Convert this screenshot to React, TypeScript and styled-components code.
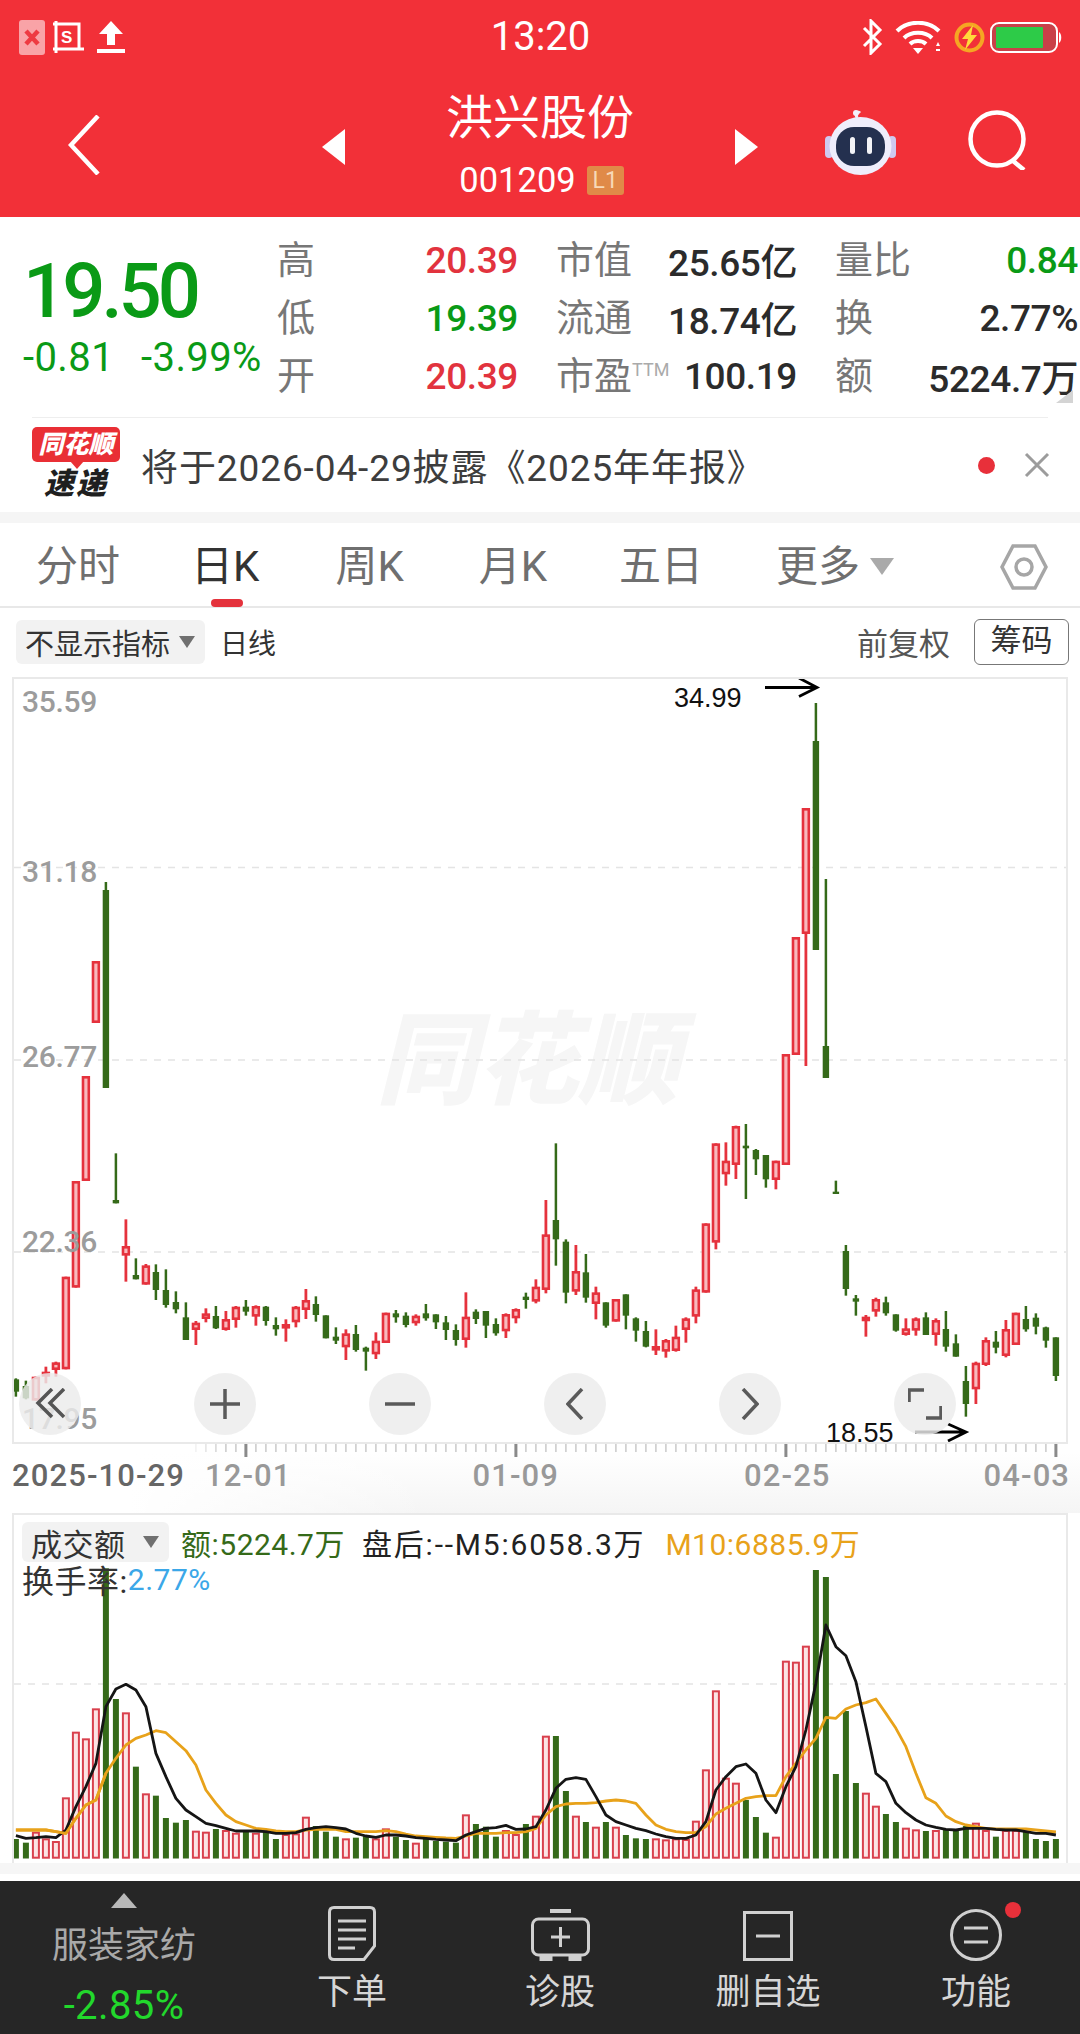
import styled, { createGlobalStyle } from "styled-components";

const sans = `Roboto, "Noto Sans CJK SC", sans-serif`;
const RED = "#e5323d";
const GREEN = "#356a19";

const GlobalStyle = createGlobalStyle`
  html, body { margin: 0; padding: 0; background: #fff; }
  * { box-sizing: border-box; }
  svg { display: block; }
`;

// [up, high, bodyTop, bodyBottom, low] in crop units: page y = 1120 + v / 3
type Candle = [number, number, number, number, number];
const candles: Candle[] = [
  [0, 775, 778, 815, 830], [0, 782, 798, 835, 838], [1, 770, 770, 842, 842], [1, 740, 755, 770, 790], [1, 725, 727, 750, 770],
  [1, 470, 470, 748, 748], [1, 183, 183, 503, 503], [1, -132, -132, 183, 183], [1, -477, -477, -291, -291], [0, -714, -690, -96, -96],
  [0, 100, 240, 250, 250], [1, 298, 378, 407, 485], [0, 415, 465, 478, 478], [1, 432, 436, 494, 494], [0, 433, 456, 510, 540],
  [0, 448, 510, 555, 563], [0, 514, 546, 568, 580], [0, 547, 592, 660, 660], [1, 603, 608, 630, 675], [1, 565, 580, 597, 607],
  [0, 558, 588, 625, 627], [1, 573, 597, 630, 632], [1, 558, 560, 600, 623], [0, 540, 560, 575, 587], [1, 556, 558, 590, 617],
  [0, 558, 560, 603, 617], [0, 592, 615, 628, 647], [1, 598, 612, 625, 665], [1, 558, 560, 607, 622], [1, 507, 540, 570, 597],
  [0, 529, 552, 585, 605], [0, 586, 586, 655, 655], [0, 622, 650, 662, 672], [1, 628, 640, 682, 720], [0, 615, 642, 690, 695],
  [0, 680, 683, 695, 752], [1, 637, 662, 703, 717], [1, 578, 578, 669, 669], [0, 570, 580, 592, 608], [0, 577, 587, 615, 622],
  [1, 583, 587, 610, 617], [0, 552, 580, 595, 602], [0, 583, 583, 607, 627], [0, 588, 607, 630, 660], [0, 613, 630, 660, 677],
  [1, 517, 590, 660, 683], [0, 568, 575, 597, 612], [0, 573, 573, 617, 654], [0, 595, 612, 640, 647], [1, 580, 582, 634, 654],
  [1, 565, 567, 595, 610], [0, 518, 530, 540, 566], [1, 478, 500, 545, 550], [1, 240, 343, 510, 520], [0, 70, 300, 358, 437],
  [0, 358, 365, 518, 550], [1, 375, 453, 515, 525], [0, 402, 457, 533, 548], [1, 500, 517, 552, 598], [0, 547, 547, 617, 623],
  [1, 537, 537, 605, 605], [0, 523, 523, 587, 628], [0, 592, 595, 632, 665], [0, 603, 633, 680, 682], [1, 628, 678, 690, 705],
  [1, 657, 660, 695, 713], [1, 617, 650, 693, 695], [1, 592, 595, 630, 668], [1, 500, 508, 590, 610], [1, 310, 310, 518, 518],
  [1, 70, 70, 368, 388], [1, 67, 122, 163, 197], [1, 17, 18, 135, 177], [0, 12, 77, 85, 237], [0, 87, 90, 118, 165],
  [0, 105, 105, 178, 203], [1, 122, 122, 180, 208], [1, -198, -198, 135, 135], [1, -549, -549, -195, -195], [1, -936, -936, -558, -162],
  [0, -1251, -1137, -510, -510], [0, -723, -222, -126, -126], [0, 182, 215, 222, 222], [0, 375, 393, 507, 527], [0, 525, 535, 545, 587],
  [1, 585, 590, 600, 650], [1, 533, 537, 575, 590], [0, 530, 547, 580, 587], [0, 583, 583, 632, 635], [1, 595, 625, 645, 647],
  [1, 592, 595, 632, 647], [0, 577, 592, 645, 645], [1, 595, 600, 645, 677], [0, 573, 627, 680, 695], [0, 643, 670, 710, 710],
  [0, 738, 783, 852, 890], [1, 725, 728, 808, 852], [1, 652, 660, 735, 738], [0, 633, 665, 683, 700], [1, 600, 627, 708, 712],
  [1, 578, 578, 675, 675], [0, 558, 597, 628, 635], [0, 580, 593, 620, 643], [0, 620, 622, 662, 683], [0, 652, 652, 768, 783],
];

// bar tops, crop units: page y = 1510 + v / 3
const volumes = [
  987, 998, 965, 985, 993, 862, 665, 685, 595, 175, 567, 607, 770, 850, 857, 924, 938, 930, 962, 965, 957,
  960, 968, 965, 968, 965, 987, 972, 970, 920, 948, 965, 980, 985, 983, 978, 985, 955, 980, 990, 998, 985,
  993, 995, 998, 913, 942, 950, 980, 960, 972, 942, 917, 677, 678, 843, 917, 936, 950, 936, 950, 975, 985,
  987, 985, 988, 985, 987, 932, 778, 541, 803, 818, 870, 921, 968, 980, 452, 455, 407, 180, 201, 792, 603,
  819, 848, 887, 912, 936, 953, 958, 963, 960, 960, 960, 948, 938, 960, 980, 960, 960, 965, 987, 993, 987,
];

const m5 = [
  977, 985, 983, 980, 983, 960, 890, 830, 760, 590, 537, 523, 540, 590, 730, 800, 865, 900, 920, 940, 947,
  955, 963, 963, 963, 965, 970, 970, 968, 958, 953, 950, 953, 957, 970, 978, 982, 975, 975, 978, 983, 985,
  988, 990, 992, 975, 965, 955, 953, 946, 958, 957, 950, 900, 835, 808, 803, 808, 860, 915, 935, 945, 955,
  962, 972, 980, 985, 985, 975, 935, 840, 800, 770, 762, 790, 870, 908, 830, 770, 660, 520, 345, 410, 437,
  515, 650, 790, 815, 880, 908, 930, 945, 952, 958, 960, 955, 955, 955, 958, 960, 960, 965, 970, 970, 975,
];

const m10 = [
  960, 960, 960, 960, 965, 970, 925, 885, 870, 790, 745, 705, 685, 675, 662, 668, 695, 722, 765, 840, 880,
  915, 935, 945, 955, 958, 963, 965, 965, 960, 958, 957, 958, 965, 965, 965, 965, 962, 965, 972, 978, 980,
  982, 984, 985, 978, 970, 970, 970, 968, 968, 965, 955, 915, 890, 882, 880, 880, 878, 873, 870, 873, 880,
  915, 945, 958, 965, 968, 968, 950, 912, 895, 880, 865, 860, 857, 857, 800, 760, 720, 685, 622, 625, 597,
  585, 578, 567, 610, 655, 710, 790, 863, 880, 918, 935, 945, 950, 955, 957, 957, 957, 957, 960, 963, 966,
];

const cx = (i: number) => 15.9 + i * 10;
const ky = (v: number) => 1120 + v / 3;
const vy = (v: number) => 1510 + v / 3;
const linePts = (data: number[]) => data.map((v, i) => `${cx(i)},${vy(v)}`).join(" ");

const Page = styled.div`
  width: 1080px;
  height: 2034px;
  overflow: hidden;
  background: #fff;
  display: flex;
  flex-direction: column;
  font-family: ${sans};
`;

const Header = styled.header`
  height: 217px;
  background: #f23038;
  color: #fff;
  flex: none;
`;

const StatusBar = styled.div`
  height: 60px;
  display: grid;
  grid-template-columns: 1fr auto 1fr;
  align-items: center;
  padding: 14px 18px 0 19px;
`;

const StatusGroup = styled.div<{ $right?: boolean }>`
  display: flex;
  align-items: center;
  justify-content: ${(p) => (p.$right ? "flex-end" : "flex-start")};
  gap: 5px;
`;

const StatusIcon = styled.div<{ $left: number }>`
  margin-left: ${(p) => p.$left}px;
`;

const Clock = styled.div`
  font-size: 40px;
  line-height: 40px;
`;

const NavBar = styled.div`
  height: 157px;
  display: flex;
  align-items: flex-start;
`;

const BackButton = styled.div`
  width: 322px;
  padding: 55px 0 0 68px;
`;

const Arrow = styled.div<{ $dir: "left" | "right" }>`
  margin-top: 69px;
  width: 0;
  height: 0;
  border-top: 18px solid transparent;
  border-bottom: 18px solid transparent;
  ${(p) => (p.$dir === "left" ? "border-right: 23px solid #fff;" : "border-left: 23px solid #fff;")}
`;

const TitleBlock = styled.div`
  width: 390px;
  display: flex;
  flex-direction: column;
  align-items: center;
  padding-top: 32px;
`;

const StockName = styled.div`
  font-size: 47px;
  line-height: 52px;
`;

const CodeRow = styled.div`
  margin-top: 19px;
  display: flex;
  align-items: center;
  gap: 11px;
  font-size: 34.5px;
  line-height: 34px;
  padding-left: 3px;
`;

const LevelBadge = styled.span`
  width: 37px;
  height: 29px;
  background: #e08a48;
  color: #f7d9b8;
  border-radius: 3px;
  font-size: 23px;
  line-height: 29px;
  text-align: center;
`;

const NavRight = styled.div`
  flex: 1;
  display: flex;
  align-items: flex-start;
  padding: 50px 0 0 67px;
  gap: 71px;
`;

const Quote = styled.section`
  position: relative;
  height: 200px;
  display: flex;
  flex: none;
`;

const PriceBlock = styled.div`
  width: 277px;
  padding: 32px 0 0 23px;
`;

const Price = styled.div`
  font-size: 76px;
  line-height: 84px;
  font-weight: 500;
  letter-spacing: -4px;
  color: #0a9a16;
`;

const Changes = styled.div`
  margin-top: 5px;
  display: flex;
  gap: 27px;
  font-size: 40px;
  line-height: 40px;
  color: #0a9a16;
  white-space: nowrap;
  letter-spacing: 0.4px;
`;

const StatGrid = styled.div`
  display: grid;
  grid-template-columns: 241px 241px 243px;
  column-gap: 38px;
  grid-auto-rows: 58px;
  padding-top: 13px;
`;

const StatCell = styled.div`
  display: flex;
  justify-content: space-between;
  align-items: center;
  white-space: nowrap;
`;

const StatLabel = styled.span`
  font-size: 38px;
  margin-bottom: 5px;
  color: #777;
  sup {
    font-size: 18px;
    line-height: 1;
    vertical-align: 13px;
    color: #aaa;
  }
`;

const StatValue = styled.span<{ $color?: string }>`
  font-size: 37px;
  font-weight: 500;
  margin-top: 2px;
  letter-spacing: -0.4px;
  color: ${(p) => p.$color || "#2b2b2b"};
`;

const CornerMark = styled.div`
  position: absolute;
  right: 7px;
  bottom: 14px;
  width: 0;
  height: 0;
  border-left: 17px solid transparent;
  border-bottom: 13px solid #d4d4d4;
`;

const NewsRow = styled.section`
  margin: 0 32px;
  height: 95px;
  flex: none;
  border-top: 1.5px solid #eee;
  display: flex;
  align-items: center;
`;

const LogoBox = styled.div`
  width: 88px;
  height: 76px;
  display: flex;
  flex-direction: column;
  align-items: center;
  flex: none;
`;

const LogoBubble = styled.div`
  position: relative;
  width: 88px;
  height: 35px;
  background: #e92f35;
  border-radius: 5px;
  color: #fff;
  font-size: 25px;
  line-height: 35px;
  font-weight: 900;
  font-style: italic;
  text-align: center;
  white-space: nowrap;
  &::after {
    content: "";
    position: absolute;
    left: 38px;
    bottom: -7px;
    border-left: 7px solid transparent;
    border-right: 7px solid transparent;
    border-top: 8px solid #e92f35;
  }
`;

const LogoLabel = styled.div`
  margin-top: 6px;
  font-size: 30px;
  line-height: 32px;
  font-weight: 900;
  font-style: italic;
  color: #1f1f1f;
  letter-spacing: 2px;
`;

const NewsText = styled.div`
  margin-left: 21px;
  flex: 1;
  font-size: 37px;
  color: #3d3d3d;
  white-space: nowrap;
  letter-spacing: 0.9px;
`;

const RedDot = styled.span<{ $size: number }>`
  display: block;
  width: ${(p) => p.$size}px;
  height: ${(p) => p.$size}px;
  border-radius: 50%;
  background: #e8303a;
  flex: none;
`;

const CloseIcon = styled.div`
  margin: 0 -2px 0 29px;
`;

const Band = styled.div<{ $h: number; $bg: string }>`
  height: ${(p) => p.$h}px;
  background: ${(p) => p.$bg};
  flex: none;
`;

const Tabs = styled.nav`
  height: 85px;
  flex: none;
  position: relative;
  border-bottom: 2px solid #e8e8e8;
  display: flex;
  align-items: center;
  padding-top: 4px;
`;

const Tab = styled.div<{ $active?: boolean; $left: number }>`
  position: relative;
  margin-left: ${(p) => p.$left}px;
  font-size: 42px;
  line-height: 56px;
  color: ${(p) => (p.$active ? "#333" : "#6f6f6f")};
  ${(p) =>
    p.$active &&
    `&::after {
      content: "";
      position: absolute;
      left: 20px;
      bottom: -12px;
      width: 32px;
      height: 8px;
      border-radius: 4px;
      background: #e4323c;
    }`}
`;

const TabCaret = styled.span`
  margin: 0 0 0 10px;
  width: 0;
  height: 0;
  border-left: 12px solid transparent;
  border-right: 12px solid transparent;
  border-top: 17px solid #aaa;
`;

const HexWrap = styled.div`
  margin-left: auto;
  margin-right: 32px;
`;

const Toolbar = styled.div`
  height: 69px;
  flex: none;
  display: flex;
  align-items: center;
  padding: 0 11px 2px 16px;
`;

const Chip = styled.div<{ $w: number; $h: number }>`
  width: ${(p) => p.$w}px;
  height: ${(p) => p.$h}px;
  background: #f2f2f2;
  border-radius: 6px;
  display: flex;
  align-items: center;
  justify-content: space-between;
  padding: 0 10px 0 9px;
  color: #333;
  white-space: nowrap;
`;

const ChipText = styled.span<{ $size: number }>`
  font-size: ${(p) => p.$size}px;
`;

const Caret = styled.span<{ $w: number; $h: number }>`
  width: 0;
  height: 0;
  border-left: ${(p) => p.$w / 2}px solid transparent;
  border-right: ${(p) => p.$w / 2}px solid transparent;
  border-top: ${(p) => p.$h}px solid #707070;
`;

const PlainText = styled.span<{ $size: number; $left: number; $color: string }>`
  margin-left: ${(p) => p.$left}px;
  font-size: ${(p) => p.$size}px;
  color: ${(p) => p.$color};
  white-space: nowrap;
`;

const OutlineButton = styled.div`
  margin-left: 24px;
  width: 95px;
  height: 46px;
  border: 1.5px solid #777;
  border-radius: 6px;
  font-size: 31px;
  line-height: 42px;
  text-align: center;
  color: #333;
`;

const Spacer = styled.div`
  flex: 1;
`;

const ChartFrame = styled.section`
  position: relative;
  margin: 0 12px;
  height: 767px;
  flex: none;
  border: 2px solid #e9e9e9;
  svg {
    position: relative;
    z-index: 1;
  }
`;

const Watermark = styled.div`
  position: absolute;
  left: 362px;
  top: 328px;
  font-size: 101px;
  line-height: 110px;
  font-weight: 900;
  font-style: italic;
  color: #f6f6f6;
  white-space: nowrap;
`;

const AxisLabel = styled.span<{ $top: number }>`
  position: absolute;
  left: 8px;
  top: ${(p) => p.$top}px;
  z-index: 2;
  font-size: 30px;
  line-height: 30px;
  font-weight: 500;
  letter-spacing: -0.3px;
  color: #9c9c9c;
`;

const PointLabel = styled.span<{ $left: number; $top: number }>`
  position: absolute;
  left: ${(p) => p.$left}px;
  top: ${(p) => p.$top}px;
  z-index: 2;
  font-family: "Liberation Sans", sans-serif;
  font-size: 27px;
  line-height: 27px;
  color: #111;
`;

const ChartButtons = styled.div`
  position: absolute;
  left: 5px;
  top: 694px;
  z-index: 3;
  display: flex;
  gap: 113px;
`;

const RoundButton = styled.div`
  width: 62px;
  height: 62px;
  border-radius: 50%;
  background: rgba(235, 235, 236, 0.82);
  display: flex;
  align-items: center;
  justify-content: center;
`;

const DateAxis = styled.div`
  height: 69px;
  flex: none;
  position: relative;
  background:
    linear-gradient(90deg, #fff 12%, rgba(255, 255, 255, 0) 40%),
    linear-gradient(180deg, #fff 12%, #f5f5f5 100%);
`;

const TickStrip = styled.svg`
  position: absolute;
  left: 0;
  top: 0;
`;

const DateLabels = styled.div`
  display: flex;
  padding: 14px 0 0 12px;
`;

const DateLabel = styled.span<{ $gap: number; $dark?: boolean }>`
  margin-left: ${(p) => p.$gap}px;
  font-size: 31px;
  line-height: 36px;
  letter-spacing: 1.1px;
  font-weight: 500;
  color: ${(p) => (p.$dark ? "#666" : "#999")};
  white-space: nowrap;
`;

const VolumeFrame = styled.section`
  position: relative;
  margin: 0 12px;
  height: 350px;
  flex: none;
  border: 2px solid #e9e9e9;
  border-bottom: none;
`;

const Legend = styled.div`
  position: absolute;
  left: 8px;
  top: 7px;
  z-index: 2;
  font-size: 30px;
`;

const LegendRow = styled.div<{ $pull?: number }>`
  display: flex;
  align-items: center;
  height: 40px;
  margin-top: ${(p) => (p.$pull ? -p.$pull : 0)}px;
  white-space: nowrap;
  letter-spacing: 0.5px;
`;

const LegendItem = styled.span<{ $color: string; $left?: number; $spacing?: number; $size?: number }>`
  color: ${(p) => p.$color};
  margin-left: ${(p) => p.$left || 0}px;
  ${(p) => p.$spacing !== undefined && `letter-spacing: ${p.$spacing}px;`}
  ${(p) => p.$size !== undefined && `font-size: ${p.$size}px;`}
`;

const Footer = styled.footer`
  flex: 1;
  background: #262626;
  display: grid;
  grid-template-columns: 248px repeat(4, 208px);
  color: #d6d6d6;
`;

const SectorCell = styled.div`
  display: flex;
  flex-direction: column;
  align-items: center;
  padding-top: 12px;
`;

const SectorCaret = styled.span`
  width: 0;
  height: 0;
  border-left: 13px solid transparent;
  border-right: 13px solid transparent;
  border-bottom: 15px solid #b8b8b8;
`;

const SectorName = styled.div`
  margin-top: 15px;
  font-size: 36px;
  line-height: 46px;
  color: #a9a9a9;
`;

const SectorChange = styled.div`
  margin-top: 16px;
  font-size: 40px;
  line-height: 42px;
  letter-spacing: 0.4px;
  color: #22d82c;
`;

const FooterItem = styled.div`
  position: relative;
  display: flex;
  flex-direction: column;
  align-items: center;
  padding-top: 24px;
`;

const IconSlot = styled.div`
  height: 56px;
  display: flex;
  align-items: flex-end;
`;

const FooterLabel = styled.div`
  margin-top: 10px;
  font-size: 35px;
  line-height: 44px;
`;

const BadgeDot = styled.div`
  position: absolute;
  left: 133px;
  top: 21px;
`;

const Candles = () => (
  <>
    {candles.map(([up, high, top, bottom, low], i) => {
      const x = cx(i);
      const color = up ? RED : GREEN;
      return (
        <g key={i}>
          <line x1={x} x2={x} y1={ky(high)} y2={ky(low)} stroke={color} strokeWidth={up ? 2.8 : 2.5} />
          {up ? (
            <rect
              x={x - 2.9}
              y={ky(top) + 1.3}
              width={5.8}
              height={Math.max(ky(bottom) - ky(top) - 2.6, 2)}
              fill="#f9b9bd"
              stroke={color}
              strokeWidth={2.6}
            />
          ) : (
            <rect x={x - 3.2} y={ky(top)} width={6.4} height={Math.max(ky(bottom) - ky(top), 2)} fill={color} />
          )}
        </g>
      );
    })}
  </>
);

const VolumeBars = () => (
  <>
    {volumes.map((v, i) => {
      const x = cx(i);
      const up = candles[i][0];
      const top = vy(v);
      return up ? (
        <rect key={i} x={x - 3} y={top + 1} width={6} height={1857.7 - top - 1} fill="#fce3e4" stroke="#d9404d" strokeWidth={2} />
      ) : (
        <rect key={i} x={x - 3} y={top} width={6} height={1858.5 - top} fill={GREEN} />
      );
    })}
  </>
);

const stats: { label: React.ReactNode; value: string; color?: string }[] = [
  { label: "高", value: "20.39", color: "#e2333e" },
  { label: "市值", value: "25.65亿" },
  { label: "量比", value: "0.84", color: "#0a9a16" },
  { label: "低", value: "19.39", color: "#0a9a16" },
  { label: "流通", value: "18.74亿" },
  { label: "换", value: "2.77%" },
  { label: "开", value: "20.39", color: "#e2333e" },
  { label: <>市盈<sup>TTM</sup></>, value: "100.19" },
  { label: "额", value: "5224.7万" },
];

const ticks = Array.from({ length: 87 }, (_, k) => k + 18);

export default function App() {
  return (
    <Page>
      <GlobalStyle />
      <Header>
        <StatusBar>
          <StatusGroup>
            <svg width="26" height="35" viewBox="0 0 26 35">
              <rect width="26" height="35" rx="3" fill="#f9a3a7" />
              <path d="M7 11 L19 24 M19 11 L7 24" stroke="#ee3a42" strokeWidth="4.5" />
            </svg>
            <StatusIcon $left={3}>
              <svg width="31" height="32" viewBox="0 0 31 32" fill="none" stroke="#fff">
                <path d="M3 0 V32 M0 3 H26 V28 M0 28 H31" strokeWidth="3" />
                <text x="8" y="22" fontFamily="Liberation Sans" fontSize="17" fontWeight="700" fill="#fff" stroke="none">S</text>
              </svg>
            </StatusIcon>
            <StatusIcon $left={8}>
              <svg width="28" height="32" viewBox="0 0 28 32">
                <path d="M14 0 L26 13 H18 V24 H10 V13 H2 Z M0 28 H28 V32 H0 Z" fill="#fff" />
              </svg>
            </StatusIcon>
          </StatusGroup>
          <Clock>13:20</Clock>
          <StatusGroup $right>
            <svg width="22" height="36" viewBox="0 0 22 36" fill="none" stroke="#fff" strokeWidth="3">
              <path d="M3 9 L19 25 L10 34 V2 L19 11 L3 27" />
            </svg>
            <StatusIcon $left={7}>
              <svg width="46" height="33" viewBox="0 0 46 33" fill="none" stroke="#fff">
                <path d="M2 10 C13 -1 33 -1 44 10" strokeWidth="4" />
                <path d="M9 17 C16 10 30 10 37 17" strokeWidth="4" />
                <path d="M15 23 C19 19 27 19 31 23" strokeWidth="4" />
                <path d="M18 27 H28 L23 33 Z" fill="#fff" stroke="none" />
                <path d="M41 25 L45 25 L43 21 Z M41 28 H45 V30 H41 Z" fill="#fff" stroke="none" />
              </svg>
            </StatusIcon>
            <StatusIcon $left={8}>
              <svg width="31" height="31" viewBox="0 0 31 31">
                <circle cx="15.5" cy="15.5" r="13" fill="none" stroke="#f5a623" strokeWidth="4" />
                <path d="M19 3 L8 17 H14 L11 28 L23 13 H17 Z" fill="#ffd93b" />
              </svg>
            </StatusIcon>
            <svg width="72" height="31" viewBox="0 0 72 31">
              <rect x="1" y="1" width="66" height="29" rx="8" fill="#c94048" stroke="#fff" strokeWidth="2" />
              <rect x="6" y="5" width="47" height="21" rx="1" fill="#2dcb48" />
              <path d="M69 10 C72 12 72 19 69 21 Z" fill="#fff" />
            </svg>
          </StatusGroup>
        </StatusBar>
        <NavBar>
          <BackButton>
            <svg width="32" height="60" viewBox="0 0 32 60" fill="none" stroke="#fff" strokeWidth="4.5">
              <path d="M30 1 L3 30 L30 59" />
            </svg>
          </BackButton>
          <Arrow $dir="left" />
          <TitleBlock>
            <StockName>洪兴股份</StockName>
            <CodeRow>
              001209
              <LevelBadge>L1</LevelBadge>
            </CodeRow>
          </TitleBlock>
          <Arrow $dir="right" />
          <NavRight>
            <svg width="72" height="66" viewBox="0 0 72 66">
              <path d="M32 8 C30 3 33 1 35 3" fill="none" stroke="#ecebf7" strokeWidth="3" />
              <circle cx="31" cy="3" r="3" fill="#f3f1fb" />
              <rect x="0" y="26" width="8" height="22" rx="4" fill="#cfc9ef" />
              <rect x="63" y="26" width="8" height="22" rx="4" fill="#cfc9ef" />
              <ellipse cx="35.5" cy="36" rx="31" ry="29" fill="#efedfb" />
              <rect x="11" y="17" width="49" height="39" rx="18" fill="#24304f" />
              <rect x="25" y="27" width="5" height="17" rx="2.5" fill="#f3f3f7" />
              <rect x="42" y="27" width="5" height="17" rx="2.5" fill="#f3f3f7" />
            </svg>
            <svg width="62" height="60" viewBox="0 0 62 60" fill="none" stroke="#fff" strokeWidth="4.5">
              <circle cx="29" cy="29" r="26.5" />
              <path d="M44 50 L56 60" />
            </svg>
          </NavRight>
        </NavBar>
      </Header>

      <Quote>
        <PriceBlock>
          <Price>19.50</Price>
          <Changes>
            <span>-0.81</span>
            <span>-3.99%</span>
          </Changes>
        </PriceBlock>
        <StatGrid>
          {stats.map((s, i) => (
            <StatCell key={i}>
              <StatLabel>{s.label}</StatLabel>
              <StatValue $color={s.color}>{s.value}</StatValue>
            </StatCell>
          ))}
        </StatGrid>
        <CornerMark />
      </Quote>

      <NewsRow>
        <LogoBox>
          <LogoBubble>同花顺</LogoBubble>
          <LogoLabel>速递</LogoLabel>
        </LogoBox>
        <NewsText>将于2026-04-29披露《2025年年报》</NewsText>
        <RedDot $size={17} />
        <CloseIcon>
          <svg width="26" height="26" viewBox="0 0 26 26" stroke="#9c9c9c" strokeWidth="3">
            <path d="M2 2 L24 24 M24 2 L2 24" />
          </svg>
        </CloseIcon>
      </NewsRow>
      <Band $h={11} $bg="#f5f5f5" />

      <Tabs>
        <Tab $left={36}>分时</Tab>
        <Tab $left={71} $active>日K</Tab>
        <Tab $left={76}>周K</Tab>
        <Tab $left={75}>月K</Tab>
        <Tab $left={72}>五日</Tab>
        <Tab $left={73}>更多</Tab>
        <TabCaret />
        <HexWrap>
          <svg width="48" height="46" viewBox="0 0 48 46" fill="none" stroke="#a6a6a6" strokeWidth="3.5">
            <path d="M13 2 H35 L46 23 L35 44 H13 L2 23 Z" />
            <circle cx="24" cy="23" r="8" />
          </svg>
        </HexWrap>
      </Tabs>

      <Toolbar>
        <Chip $w={189} $h={44}>
          <ChipText $size={29}>不显示指标</ChipText>
          <Caret $w={17} $h={12} />
        </Chip>
        <PlainText $size={28} $left={15} $color="#333">日线</PlainText>
        <Spacer />
        <PlainText $size={31} $left={0} $color="#555">前复权</PlainText>
        <OutlineButton>筹码</OutlineButton>
      </Toolbar>

      <ChartFrame>
        <Watermark>同花顺</Watermark>
        <svg width="1052" height="763" viewBox="14 679 1052 763">
          {[867.5, 1060, 1252].map((y) => (
            <line key={y} x1="14" x2="1066" y1={y} y2={y} stroke="#e4e4e4" strokeWidth="1.5" strokeDasharray="7 7" />
          ))}
          <Candles />
          <g fill="none" stroke="#000" strokeWidth="2.8">
            <path d="M765 687.5 H816 M799 678 L817 687.5 L799 696.5" />
            <path d="M915 1432 H965 M948 1424 L966 1432 L948 1441" />
          </g>
        </svg>
        <AxisLabel $top={8}>35.59</AxisLabel>
        <AxisLabel $top={178}>31.18</AxisLabel>
        <AxisLabel $top={363}>26.77</AxisLabel>
        <AxisLabel $top={548}>22.36</AxisLabel>
        <AxisLabel $top={725}>17.95</AxisLabel>
        <PointLabel $left={660} $top={6}>34.99</PointLabel>
        <PointLabel $left={812} $top={741}>18.55</PointLabel>
        <ChartButtons>
          <RoundButton>
            <svg width="30" height="32" viewBox="0 0 30 32" fill="none" stroke="#555" strokeWidth="3.5">
              <path d="M17 1 L3 15 L17 29 M29 1 L15 15 L29 29" />
            </svg>
          </RoundButton>
          <RoundButton>
            <svg width="30" height="30" viewBox="0 0 30 30" stroke="#5a5a5a" strokeWidth="3.5">
              <path d="M15 0 V30 M0 15 H30" />
            </svg>
          </RoundButton>
          <RoundButton>
            <svg width="30" height="4" viewBox="0 0 30 4" stroke="#5a5a5a" strokeWidth="3.5">
              <path d="M0 2 H30" />
            </svg>
          </RoundButton>
          <RoundButton>
            <svg width="18" height="32" viewBox="0 0 18 32" fill="none" stroke="#5a5a5a" strokeWidth="3.5">
              <path d="M16 1 L2 16 L16 31" />
            </svg>
          </RoundButton>
          <RoundButton>
            <svg width="18" height="32" viewBox="0 0 18 32" fill="none" stroke="#5a5a5a" strokeWidth="3.5">
              <path d="M2 1 L16 16 L2 31" />
            </svg>
          </RoundButton>
          <RoundButton>
            <svg width="34" height="32" viewBox="0 0 34 32" fill="none" stroke="#5a5a5a" strokeWidth="3.5">
              <path d="M1 14 V2 H16 M33 18 V30 H18" />
            </svg>
          </RoundButton>
        </ChartButtons>
      </ChartFrame>

      <DateAxis>
        <TickStrip width="1080" height="14" viewBox="0 1444 1080 14">
          {ticks.map((i) => {
            const big = (i - 23) % 27 === 0;
            return (
              <line
                key={i}
                x1={cx(i)}
                x2={cx(i)}
                y1={1444}
                y2={big ? 1457 : 1452}
                stroke={big ? "#8a8a8a" : "#c9c9c9"}
                strokeWidth={big ? 3 : 1.5}
                opacity={i < 21 ? (i - 17) * 0.25 : 1}
              />
            );
          })}
        </TickStrip>
        <DateLabels>
          <DateLabel $gap={0} $dark>2025-10-29</DateLabel>
          <DateLabel $gap={20}>12-01</DateLabel>
          <DateLabel $gap={181}>01-09</DateLabel>
          <DateLabel $gap={185}>02-25</DateLabel>
          <DateLabel $gap={153}>04-03</DateLabel>
        </DateLabels>
      </DateAxis>

      <VolumeFrame>
        <svg width="1052" height="348" viewBox="14 1515 1052 348">
          <line x1="14" x2="1066" y1="1684" y2="1684" stroke="#e4e4e4" strokeWidth="1.5" strokeDasharray="7 7" />
          <VolumeBars />
          <polyline points={linePts(m10)} fill="none" stroke="#e8a21a" strokeWidth="2.8" strokeLinejoin="round" />
          <polyline points={linePts(m5)} fill="none" stroke="#151515" strokeWidth="2.8" strokeLinejoin="round" />
          <polyline points={linePts(m10.slice(0, 10))} fill="none" stroke="#e8a21a" strokeWidth="2.8" strokeLinejoin="round" />
        </svg>
        <Legend>
          <LegendRow>
            <Chip $w={147} $h={40}>
              <ChipText $size={31}>成交额</ChipText>
              <Caret $w={17} $h={12} />
            </Chip>
            <LegendItem $color={GREEN} $left={12}>额:5224.7万</LegendItem>
            <LegendItem $color="#222" $left={17} $spacing={1.8}>盘后:--M5:6058.3万</LegendItem>
            <LegendItem $color="#e8a21a" $left={20}>M10:6885.9万</LegendItem>
          </LegendRow>
          <LegendRow $pull={3}>
            <LegendItem $color="#333" $size={32}>换手率:</LegendItem>
            <LegendItem $color="#3ba7e8">2.77%</LegendItem>
          </LegendRow>
        </Legend>
      </VolumeFrame>
      <Band $h={11} $bg="#f6f6f6" />
      <Band $h={7} $bg="#fff" />

      <Footer>
        <SectorCell>
          <SectorCaret />
          <SectorName>服装家纺</SectorName>
          <SectorChange>-2.85%</SectorChange>
        </SectorCell>
        <FooterItem>
          <IconSlot>
            <svg width="48" height="55" viewBox="0 0 48 55" fill="none" stroke="#d0d0d0" strokeWidth="3">
              <path d="M6 1.5 H42 Q46.5 1.5 46.5 6 V40 L36 53.5 H6 Q1.5 53.5 1.5 49 V6 Q1.5 1.5 6 1.5 Z" />
              <path d="M10 15 H38 M10 24 H38 M10 33 H38 M10 42 H27" />
            </svg>
          </IconSlot>
          <FooterLabel>下单</FooterLabel>
        </FooterItem>
        <FooterItem>
          <IconSlot>
            <svg width="59" height="52" viewBox="0 0 59 52" fill="none" stroke="#d0d0d0" strokeWidth="3">
              <path d="M19 2 H40" strokeWidth="4" />
              <rect x="1.5" y="10" width="56" height="36" rx="6" />
              <path d="M29.5 18 V38 M20 28 H39" />
              <path d="M10 47 V51 H20 V47 M39 47 V51 H49 V47" fill="#d0d0d0" />
            </svg>
          </IconSlot>
          <FooterLabel>诊股</FooterLabel>
        </FooterItem>
        <FooterItem>
          <IconSlot>
            <svg width="50" height="50" viewBox="0 0 50 50" fill="none" stroke="#d0d0d0" strokeWidth="3">
              <rect x="1.5" y="1.5" width="47" height="47" />
              <path d="M13 25 H37" />
            </svg>
          </IconSlot>
          <FooterLabel>删自选</FooterLabel>
        </FooterItem>
        <FooterItem>
          <IconSlot>
            <svg width="52" height="52" viewBox="0 0 52 52" fill="none" stroke="#d0d0d0" strokeWidth="3">
              <circle cx="26" cy="26" r="24.5" />
              <path d="M14 19 H38 M14 33 H38" />
            </svg>
          </IconSlot>
          <FooterLabel>功能</FooterLabel>
          <BadgeDot>
            <RedDot $size={16} />
          </BadgeDot>
        </FooterItem>
      </Footer>
    </Page>
  );
}
